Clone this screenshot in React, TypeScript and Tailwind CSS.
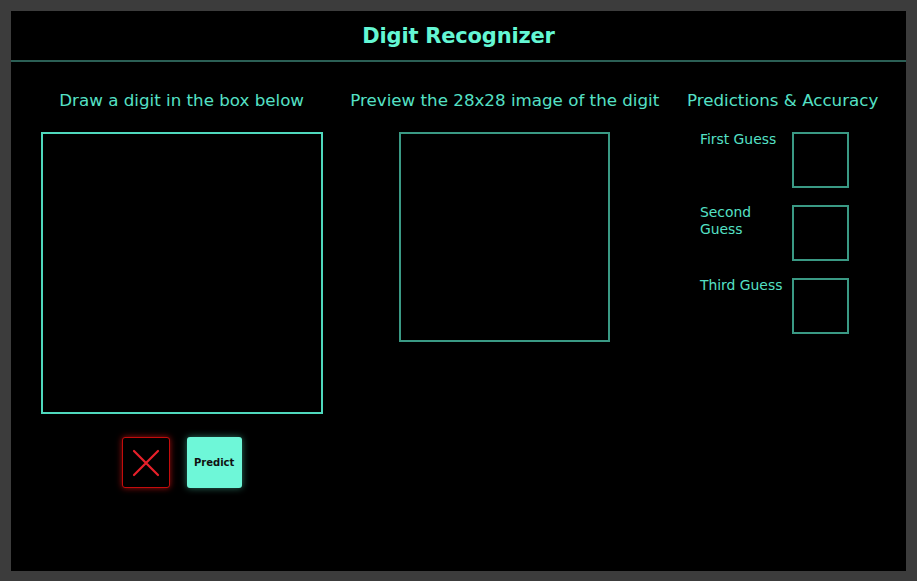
const font = { fontFamily: '"DejaVu Sans", "Noto Sans", sans-serif' };

function GuessRow({ label }: { label: string }) {
  return (
    <div className="flex items-start">
      <div className="w-[88px] text-[13.9px] leading-[17px] text-[#55e0c6] -mt-px">{label}</div>
      <div className="ml-[4px] w-[57px] h-[56px] border-2 border-[#3a9984]" />
    </div>
  );
}

export default function App() {
  return (
    <div className="w-[917px] h-[581px] bg-[#3c3c3c] pt-[11px] pl-[11px] pr-[11px] pb-[10px]" style={font}>
      <div className="h-full bg-black flex flex-col">
        <header className="h-[49px] pt-[3px] flex items-center justify-center">
          <h1 className="text-[21px] font-semibold text-[#64f7d4] tracking-[-0.2px]">Digit Recognizer</h1>
        </header>
        <div className="h-[2px] bg-[#2b5f55]" />

        <div className="flex justify-evenly pt-[27px] pl-[2px]">
          {/* draw */}
          <div className="flex flex-col items-center">
            <h2 className="text-[16.7px] leading-[22px] text-[#55e0c6] whitespace-nowrap">Draw a digit in the box below</h2>
            <div className="mt-[21px] w-[282px] h-[282px] border-2 border-[#4fd9bd]" />
            <div className="mt-[23px] flex gap-[17px]">
              <button className="w-[48px] h-[51px] rounded-[3px] border border-[#c40c0c] bg-black shadow-[0_0_6px_rgba(230,20,20,0.7)] flex items-center justify-center">
                <svg width="28" height="28" viewBox="0 0 28 28">
                  <path d="M2 2 L26 26 M26 2 L2 26" stroke="#e8202a" strokeWidth="2.2" strokeLinecap="round" />
                </svg>
              </button>
              <button className="w-[55px] h-[51px] rounded-[3px] bg-[#6ef7d8] shadow-[0_0_7px_rgba(100,255,218,0.45)] text-[10px] font-semibold text-[#111]">
                Predict
              </button>
            </div>
          </div>

          {/* preview */}
          <div className="flex flex-col items-center">
            <h2 className="text-[16.7px] leading-[22px] text-[#55e0c6] whitespace-nowrap">Preview the 28x28 image of the digit</h2>
            <div className="mt-[21px] w-[211px] h-[210px] border-2 border-[#3a9984]" />
          </div>

          {/* predictions */}
          <div className="flex flex-col">
            <h2 className="text-[16.7px] leading-[22px] text-[#55e0c6] whitespace-nowrap">Predictions &amp; Accuracy</h2>
            <div className="mt-[21px] pl-[13px] flex flex-col gap-[17px]">
              <GuessRow label="First Guess" />
              <GuessRow label="Second Guess" />
              <GuessRow label="Third Guess" />
            </div>
          </div>
        </div>
      </div>
    </div>
  );
}
